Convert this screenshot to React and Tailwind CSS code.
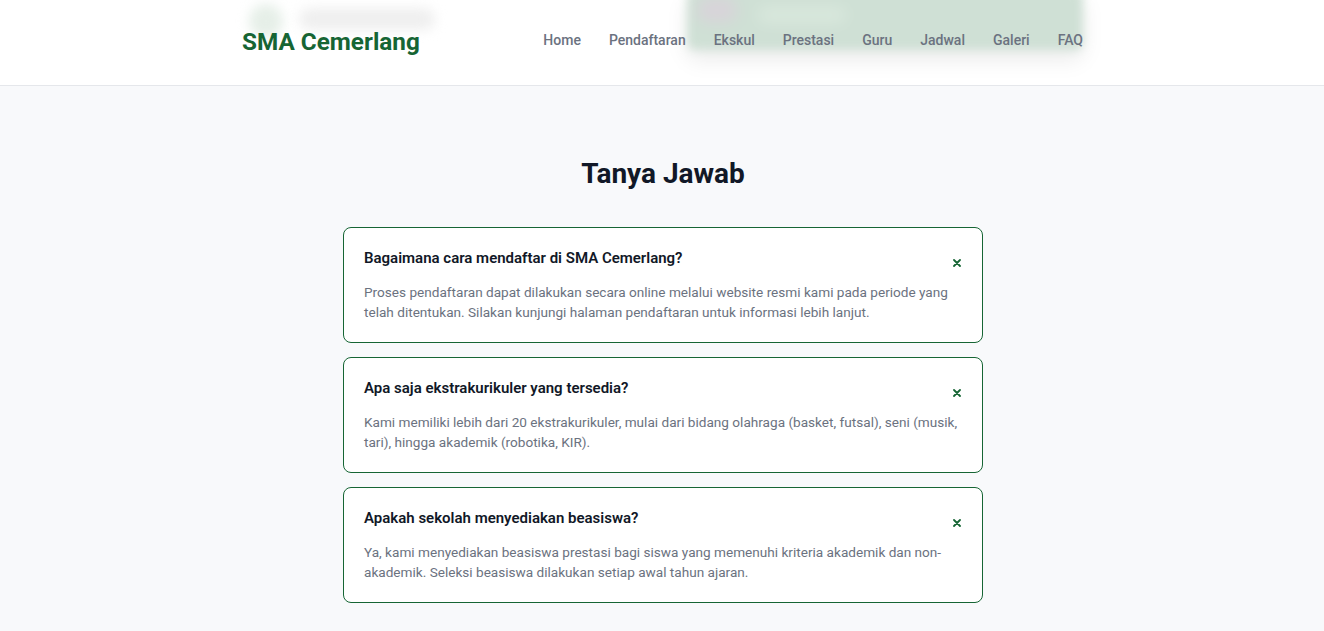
import React from "react";

const faqs = [
  {
    q: "Bagaimana cara mendaftar di SMA Cemerlang?",
    a: "Proses pendaftaran dapat dilakukan secara online melalui website resmi kami pada periode yang telah ditentukan. Silakan kunjungi halaman pendaftaran untuk informasi lebih lanjut.",
  },
  {
    q: "Apa saja ekstrakurikuler yang tersedia?",
    a: "Kami memiliki lebih dari 20 ekstrakurikuler, mulai dari bidang olahraga (basket, futsal), seni (musik, tari), hingga akademik (robotika, KIR).",
  },
  {
    q: "Apakah sekolah menyediakan beasiswa?",
    a: "Ya, kami menyediakan beasiswa prestasi bagi siswa yang memenuhi kriteria akademik dan non-akademik. Seleksi beasiswa dilakukan setiap awal tahun ajaran.",
  },
];

const nav = ["Home", "Pendaftaran", "Ekskul", "Prestasi", "Guru", "Jadwal", "Galeri", "FAQ"];

export default function App() {
  return (
    <div className="min-h-[631px] bg-[#f8f9fb] font-['Roboto',sans-serif]">
      <header className="bg-white border-b border-[#e5e7eb] overflow-hidden">
        <div className="relative w-[842px] mx-auto h-[85px] flex items-center justify-between">
          {/* blurred decorations */}
          <div className="absolute left-[8px] top-[4px] w-[34px] h-[34px] rounded-full bg-[#e6efe8] blur-[6px]" />
          <div className="absolute left-[58px] top-[8px] w-[136px] h-[22px] rounded-full bg-[#efefef] blur-[6px]" />
          <div className="absolute left-[446px] top-[-10px] w-[396px] h-[60px] rounded-[8px] bg-[#cfe0d5] blur-[5px] shadow-[0_10px_20px_rgba(0,0,0,0.08)]">
            <div className="absolute left-[10px] top-[8px] w-[40px] h-[24px] rounded-full bg-[#d8d3d9] blur-[6px]" />
            <div className="absolute left-[70px] top-[16px] w-[90px] h-[18px] rounded-full bg-[#d8e7dc] blur-[6px]" />
          </div>
          <div className="relative text-[24.3px] font-bold text-[#166534] leading-8 pl-[1px] mt-[-1px]">SMA Cemerlang</div>
          <nav className="relative flex items-center gap-[28px] text-[14px] font-medium text-[#6b7280] mt-[-5px]">
            {nav.map((n) => (
              <span key={n}>{n}</span>
            ))}
          </nav>
        </div>
      </header>
      <main className="pt-[70px] pb-[28px] pl-[2px]">
        <h2 className="text-center text-[28px] font-bold text-[#111827] leading-9 mb-[35px]">Tanya Jawab</h2>
        <div className="w-[640px] mx-auto flex flex-col gap-[14px]">
          {faqs.map((f) => (
            <div key={f.q} className="bg-white border border-[#166534] rounded-[8px] p-5">
              <div className="flex justify-between items-start">
                <h3 className="text-[15px] font-semibold text-[#111827] leading-5">{f.q}</h3>
                <span className="mt-[11px] mr-[1px]">
                  <svg width="8" height="8" viewBox="0 0 8 8" fill="none">
                    <path d="M1 1L7 7M7 1L1 7" stroke="#166534" strokeWidth="1.8" strokeLinecap="round" />
                  </svg>
                </span>
              </div>
              <p className="mt-[15px] text-[13.6px] leading-[19.5px] text-[#6b7280]">{f.a}</p>
            </div>
          ))}
        </div>
      </main>
    </div>
  );
}
